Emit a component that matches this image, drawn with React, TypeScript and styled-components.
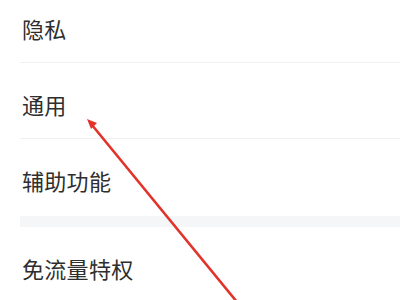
import React from 'react';
import styled, { createGlobalStyle } from 'styled-components';

const Global = createGlobalStyle`
  html, body {
    margin: 0;
    padding: 0;
    background: #ffffff;
  }
  body {
    width: 400px;
    height: 300px;
    overflow: hidden;
    font-family: "Noto Sans CJK SC", "Noto Sans", sans-serif;
  }
`;

const Screen = styled.div`
  position: relative;
  width: 400px;
  height: 300px;
  overflow: hidden;
  background: #ffffff;
`;

const List = styled.div`
  display: flex;
  flex-direction: column;
  margin-top: -13px;
  padding-left: 20px;
`;

const Row = styled.div<{ $divider?: boolean }>`
  height: 76px;
  box-sizing: border-box;
  display: flex;
  align-items: center;
  padding: 6px 0 0 2px;
  border-bottom: 1px solid ${({ $divider }) => ($divider ? '#f0f0f1' : 'transparent')};
  font-size: 22px;
  color: #2e2e2e;
  letter-spacing: 0.3px;
`;

const GroupGap = styled.div`
  height: 11px;
  margin-top: 1px;
  background: #f5f6f8;
`;

const Overlay = styled.svg`
  position: absolute;
  left: 0;
  top: 0;
  pointer-events: none;
`;

const items = [
  { label: '隐私', divider: true },
  { label: '通用', divider: true },
  { label: '辅助功能', divider: false },
];

export default function App() {
  return (
    <Screen>
      <Global />
      <List>
        {items.map((it) => (
          <Row key={it.label} $divider={it.divider}>
            {it.label}
          </Row>
        ))}
        <GroupGap />
        <Row>免流量特权</Row>
      </List>
      <Overlay width="400" height="300" viewBox="0 0 400 300">
        <line x1="92" y1="125" x2="237" y2="302" stroke="#e2332b" strokeWidth="2.6" strokeLinecap="round" />
        <polygon points="87,119 97,123 91,129" fill="#e2332b" />
      </Overlay>
    </Screen>
  );
}
